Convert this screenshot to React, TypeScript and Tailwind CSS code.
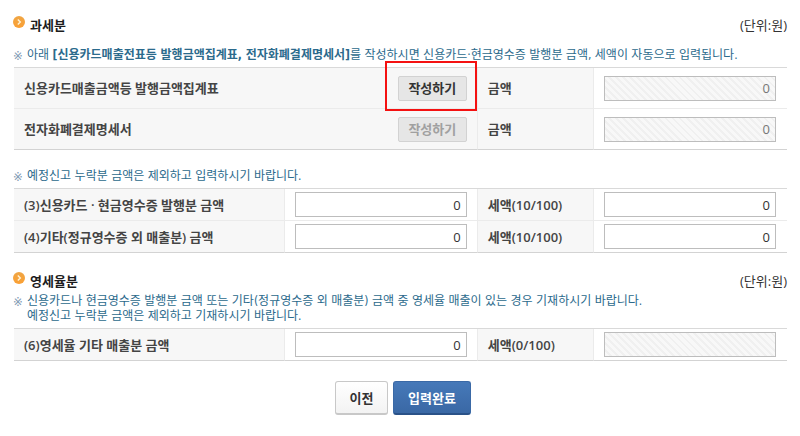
import type { ReactNode } from "react";

function SectionTitle({ children }: { children: ReactNode }) {
  return (
    <div className="flex h-5 justify-between text-[13px] leading-5">
      <h2 className="flex gap-[5px] font-bold text-[#1c1c1c]">
        <svg className="mt-px" width="12" height="12" viewBox="0 0 12 12" aria-hidden="true">
          <defs>
            <linearGradient id="bullet" x1="0" y1="0" x2="0" y2="1">
              <stop offset="0" stopColor="#efa544" />
              <stop offset="1" stopColor="#fba034" />
            </linearGradient>
          </defs>
          <circle cx="6" cy="6" r="6" fill="url(#bullet)" />
          <path d="M4.8 3.6 7.3 6 4.8 8.4" fill="none" stroke="#fff3d6" strokeWidth="1.4" />
        </svg>
        {children}
      </h2>
      <span className="text-[#333333]">(단위:원)</span>
    </div>
  );
}

function Note({ children }: { children: ReactNode }) {
  return (
    <div className="flex font-['DejaVu_Sans_Condensed','Noto_Sans_CJK_KR',sans-serif] text-[12px] leading-[15px] text-[#2b6a8c]">
      <span className="w-[14px] shrink-0 text-[13px] text-[#7f9bb3]">※</span>
      <p>{children}</p>
    </div>
  );
}

function FormTable({ children }: { children: ReactNode }) {
  return (
    <div className="mt-1 pl-px">
      <table className="w-full table-fixed border-separate border-spacing-0 border-t border-[#d9d9d9] text-[13px] leading-5">
        <colgroup>
          <col className="w-[35%]" />
          <col className="w-[25%]" />
          <col className="w-[15%]" />
          <col className="w-[25%]" />
        </colgroup>
        <tbody className="[&>tr:last-child>*]:border-b-[#d3d3d3]">{children}</tbody>
      </table>
    </div>
  );
}

function HeadCell({ htmlFor, children }: { htmlFor: string; children: ReactNode }) {
  return (
    <th
      scope="row"
      className="border-r border-b border-[#ebebeb] bg-[#f7f7f7] p-0 pl-[10px] text-left font-semibold text-[#444444]"
    >
      <label htmlFor={htmlFor}>{children}</label>
    </th>
  );
}

function InputCell({ id, value, locked = false }: { id: string; value: string; locked?: boolean }) {
  return (
    <td className="border-r border-b border-[#ebebeb] p-0 px-[10px] last:border-r-0 last:pr-[11px]">
      <input
        id={id}
        type="text"
        defaultValue={value}
        readOnly={locked}
        className="block h-[25px] w-full border border-[#bdbdbd] bg-white px-[5px] text-right text-[#333333] read-only:bg-[repeating-linear-gradient(45deg,#f8f8f8_0px,#f8f8f8_3px,#f0f0f0_3px,#f0f0f0_5px)] read-only:text-[#777777]"
      />
    </td>
  );
}

function DocumentRow({ id, title, enabled }: { id: string; title: string; enabled: boolean }) {
  return (
    <tr className="h-[41px]">
      <th
        scope="row"
        colSpan={2}
        className="relative border-r border-b border-[#ebebeb] bg-[#f7f7f7] p-0 px-[10px] font-semibold text-[#444444]"
      >
        <div className="flex items-center justify-between">
          {title}
          <button
            type="button"
            disabled={!enabled}
            className="h-[25px] w-[69px] rounded-xs border border-[#d2d2d2] bg-[#e6e6e6] leading-5 font-semibold text-[#333333] disabled:text-[#a0a0a0]"
          >
            작성하기
          </button>
        </div>
        {enabled && (
          <span className="pointer-events-none absolute -top-[7px] right-0 z-10 h-[50px] w-[92px] border-2 border-[#f41111]" />
        )}
      </th>
      <HeadCell htmlFor={id}>금액</HeadCell>
      <InputCell id={id} value="0" locked />
    </tr>
  );
}

type AmountRowProps = { id: string; title: string; taxTitle: string; taxLocked?: boolean };

function AmountRow({ id, title, taxTitle, taxLocked = false }: AmountRowProps) {
  return (
    <tr className="h-8">
      <HeadCell htmlFor={`${id}-amount`}>{title}</HeadCell>
      <InputCell id={`${id}-amount`} value="0" />
      <HeadCell htmlFor={`${id}-tax`}>{taxTitle}</HeadCell>
      <InputCell id={`${id}-tax`} value={taxLocked ? "" : "0"} locked={taxLocked} />
    </tr>
  );
}

export default function App() {
  return (
    <main className="bg-white px-[13px] pt-[15px] font-['Open_Sans','Noto_Sans_CJK_KR',sans-serif]">
      <section>
        <SectionTitle>과세분</SectionTitle>
        <div className="mt-[13px]">
          <Note>
            아래 <b className="font-bold">[신용카드매출전표등 발행금액집계표, 전자화폐결제명세서]</b>를 작성하시면
            신용카드·현금영수증 발행분 금액, 세액이 자동으로 입력됩니다.
          </Note>
        </div>
        <FormTable>
          <DocumentRow id="card" title="신용카드매출금액등 발행금액집계표" enabled />
          <DocumentRow id="emoney" title="전자화폐결제명세서" enabled={false} />
        </FormTable>
        <div className="mt-[19px]">
          <Note>예정신고 누락분 금액은 제외하고 입력하시기 바랍니다.</Note>
        </div>
        <FormTable>
          <AmountRow id="sales" title="(3)신용카드 · 현금영수증 발행분 금액" taxTitle="세액(10/100)" />
          <AmountRow id="other" title="(4)기타(정규영수증 외 매출분) 금액" taxTitle="세액(10/100)" />
        </FormTable>
      </section>

      <section className="mt-[18px]">
        <SectionTitle>영세율분</SectionTitle>
        <div className="mt-[3px]">
          <Note>
            신용카드나 현금영수증 발행분 금액 또는 기타(정규영수증 외 매출분) 금액 중 영세율 매출이 있는 경우 기재하시기 바랍니다.
            <br />
            예정신고 누락분 금액은 제외하고 기재하시기 바랍니다.
          </Note>
        </div>
        <FormTable>
          <AmountRow id="zero" title="(6)영세율 기타 매출분 금액" taxTitle="세액(0/100)" taxLocked />
        </FormTable>
      </section>

      <div className="mt-5 flex justify-center gap-[5px] pl-[6px] text-[13px] leading-5 font-bold">
        <button
          type="button"
          className="h-[34px] w-[53px] rounded-[3px] border border-b-2 border-[#c8c8c8] bg-linear-to-b from-white to-[#f3f3f3] font-semibold text-[#333333]"
        >
          이전
        </button>
        <button
          type="button"
          className="h-[34px] w-[78px] rounded-[3px] border border-b-2 border-[#3a69a6] border-b-[#2a5288] bg-linear-to-b from-[#4679b9] to-[#3a68a5] text-white"
        >
          입력완료
        </button>
      </div>
    </main>
  );
}
